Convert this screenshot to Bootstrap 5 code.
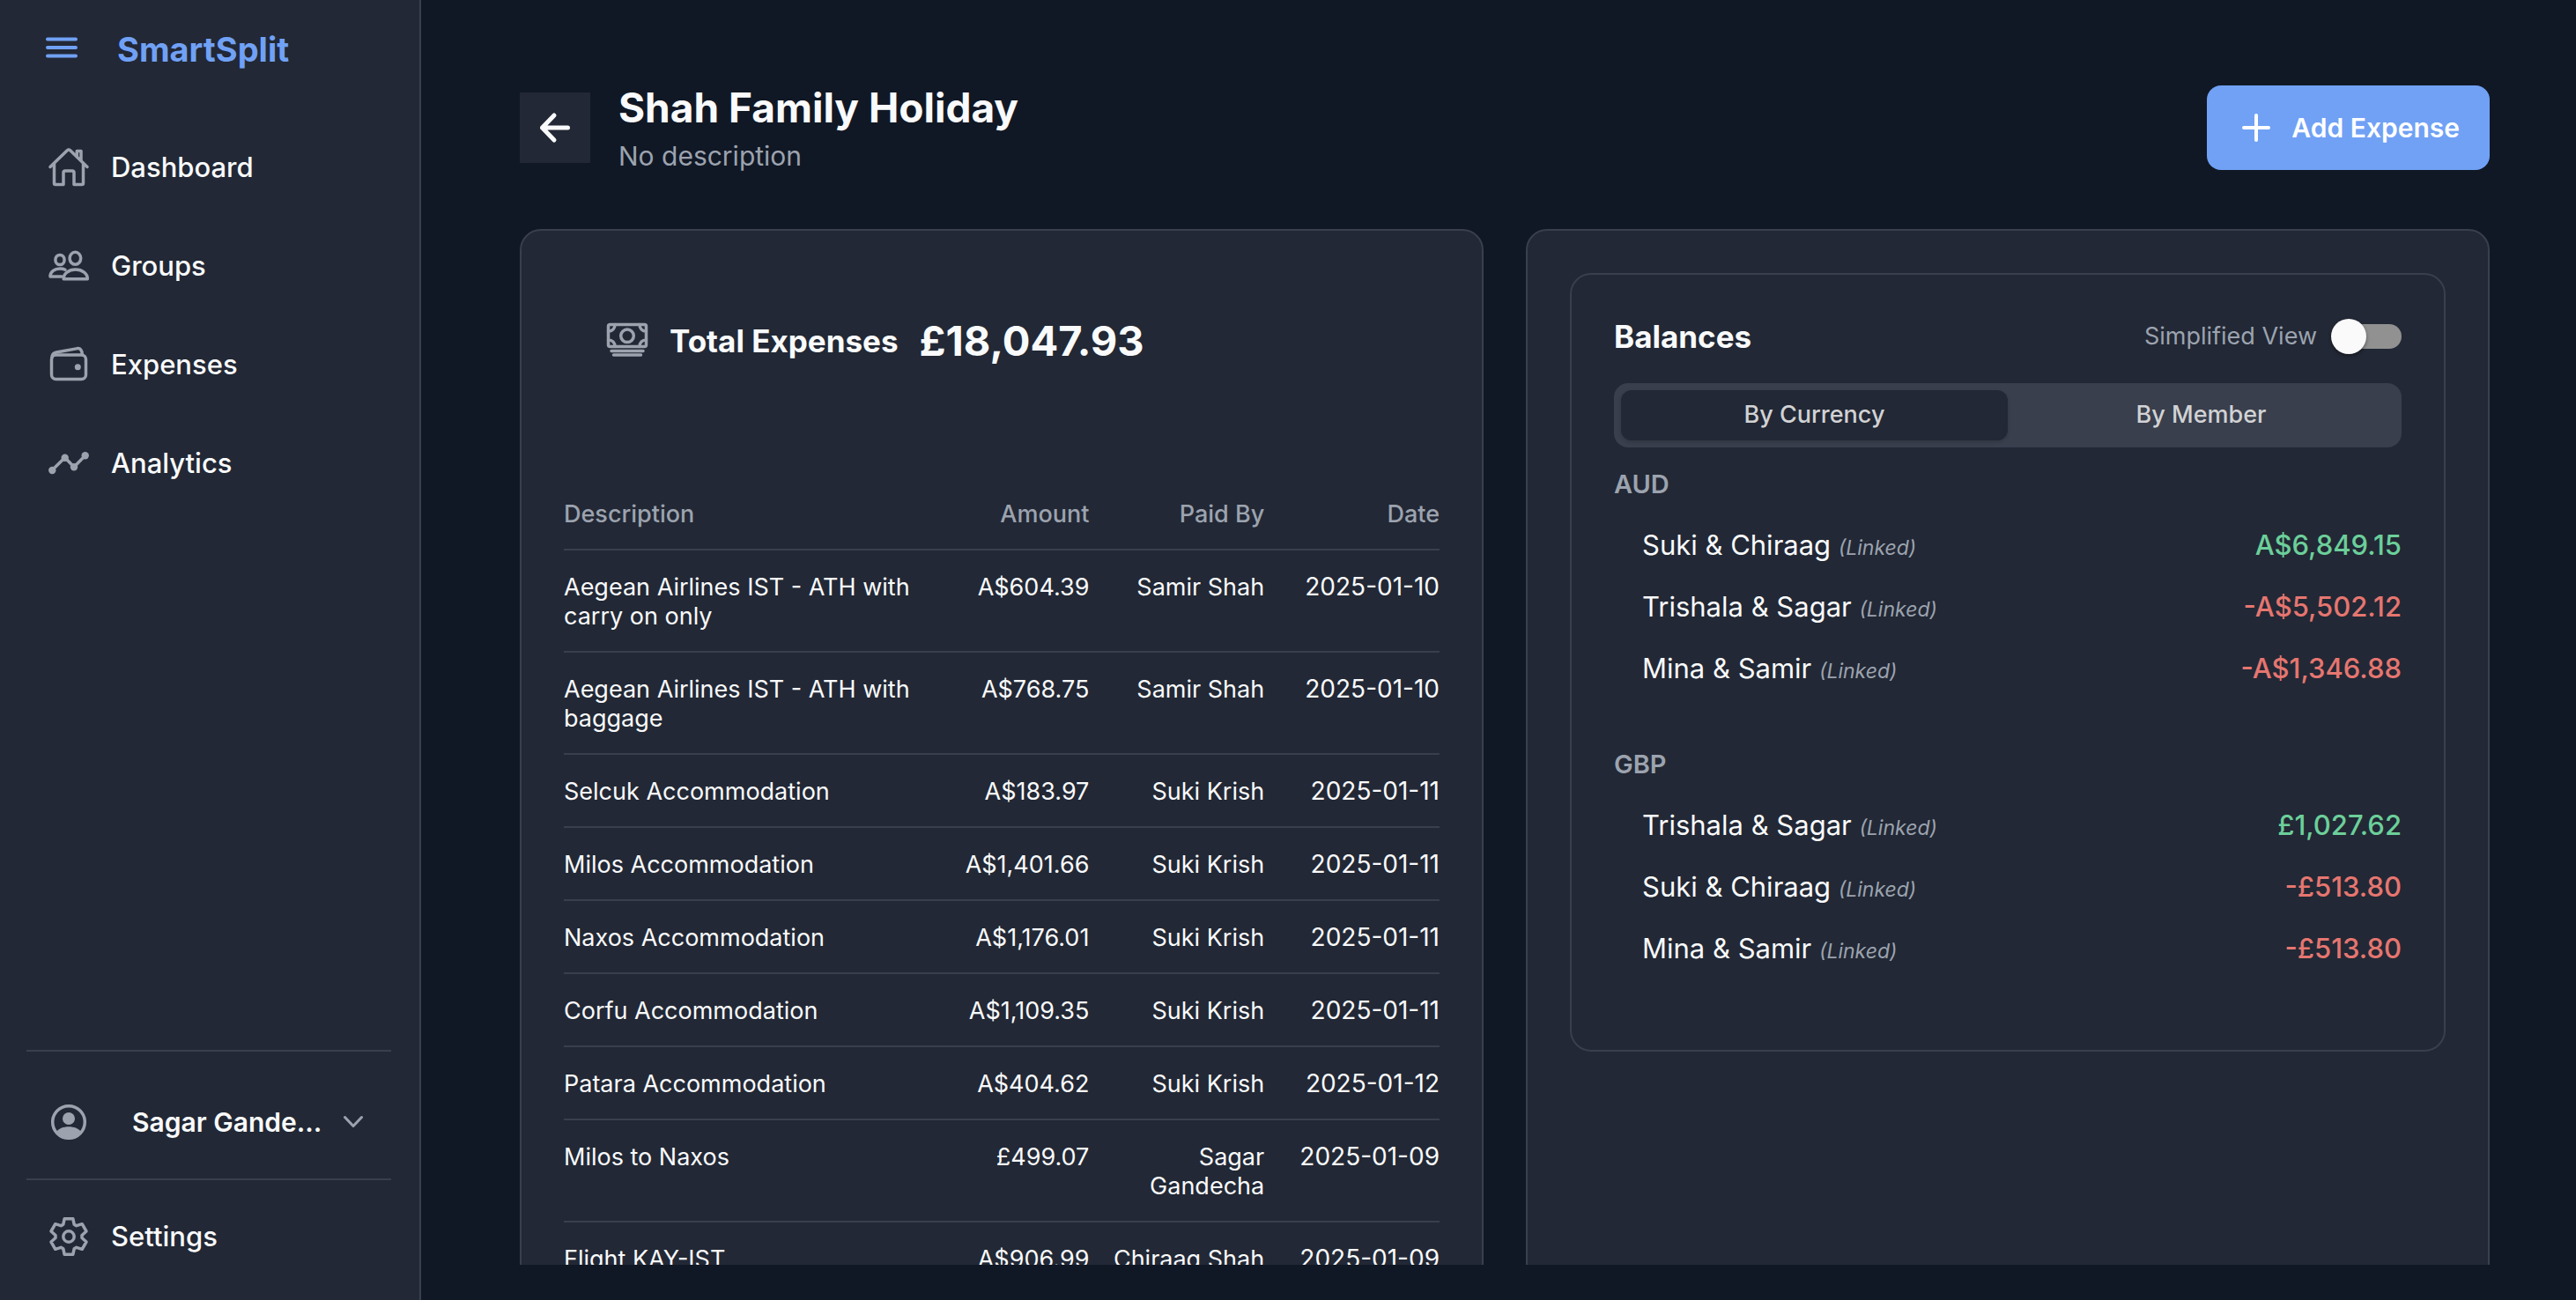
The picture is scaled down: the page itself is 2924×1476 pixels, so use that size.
<!DOCTYPE html>
<html lang="en">
<head>
<meta charset="utf-8">
<meta name="viewport" content="width=device-width, initial-scale=1">
<title>SmartSplit – Shah Family Holiday</title>
<link href="https://cdn.jsdelivr.net/npm/bootstrap@5.3.0/dist/css/bootstrap.min.css" rel="stylesheet">
<style>
  :root {
    --app-bg: #111825;
    --panel: #222835;
    --line: #393f4d;
    --ink: #f9fafb;
    --muted: #9ca3af;
    --accent: #70a1f5;
    --gain: #6ccf9a;
    --loss: #e67670;
  }
  body { background: var(--app-bg); color: var(--ink); font-family: Inter, "Liberation Sans", sans-serif; }
  svg { display: block; flex: none; fill: none; stroke: currentColor; stroke-linecap: round; stroke-linejoin: round; }
  .ico { width: 48px; height: 48px; stroke-width: 3.5; color: var(--muted); }
  .solid { fill: currentColor; stroke: none; }
  button { font-family: inherit; }

  /* Sidebar */
  .side { width: 478px; background: var(--panel); border-right: 2px solid var(--line); }
  .side-top { height: 134px; padding: 30px 52px; gap: 45px; }
  .menu-btn { color: var(--accent); margin-top: 12px; }
  .brand-name { font-size: 38px; line-height: 52px; font-weight: 700; color: var(--accent); }
  .side-item { height: 112px; padding: 0 24px; gap: 24px; font-size: 31px; font-weight: 500; color: var(--ink); text-decoration: none; }
  .side-list { padding: 0 32px 0 30px; }
  .side-rule { border-top: 2px solid var(--line); }
  .profile-box { padding: 24px 0 8px; }
  .profile-btn { font-size: 30px; font-weight: 600; }
  .profile-name { margin-left: 24px; }
  .side-foot { padding: 8px 32px 16px 30px; }

  /* Page header */
  .page { padding: 90px 98px 40px 112px; min-width: 0; }
  .page-head { gap: 32px; margin-bottom: 60px; }
  .back-btn { width: 80px; height: 80px; background: var(--panel); color: var(--ink); }
  .page-title { font-size: 46px; line-height: 64px; font-weight: 700; }
  .page-sub { font-size: 30px; line-height: 46px; color: var(--muted); }
  .add-btn { height: 96px; padding: 0 34px 0 32px; gap: 16px; border-radius: 16px; background: var(--accent); color: #fff; font-size: 30px; font-weight: 600; }

  /* Panels */
  .panels { --bs-gutter-x: 48px; }
  .panel { background: var(--panel); border: 2px solid var(--line); border-radius: 24px; padding: 48px; }
  .total-box { padding: 48px 48px 126px; gap: 24px; line-height: 58px; }
  .total-label { font-size: 35px; line-height: 58px; font-weight: 700; }
  .total-sum { font-size: 47px; font-weight: 700; }

  .expenses { table-layout: fixed; width: 100%; font-size: 27px; line-height: 33px; }
  .expenses th, .expenses td { padding: 25px 0 23px; vertical-align: top; text-align: right; border-bottom: 2px solid var(--line); }
  .expenses th { width: 20%; font-weight: 500; color: var(--muted); }
  .expenses th:first-child { width: 40%; }
  .expenses th:first-child, .expenses td:first-child { text-align: left; }
  .expenses td:last-child { font-size: 28px; }

  .bal-head { height: 44px; margin-bottom: 31px; }
  .bal-title { font-size: 35px; line-height: 44px; font-weight: 700; }
  .simple-label { font-size: 27px; line-height: 40px; color: var(--muted); margin-right: 28px; }
  .simple-switch { appearance: none; position: relative; width: 68px; height: 28px; margin: 0; border-radius: 14px; background: #919191; }
  .simple-switch::before { content: ""; position: absolute; left: -12px; top: -6px; width: 40px; height: 40px; border-radius: 50%; background: #fafafa; box-shadow: 0 2px 4px rgba(0, 0, 0, .4); }
  .seg { background: var(--line); border-radius: 16px; padding: 8px; }
  .seg-btn { height: 57px; font-size: 27px; font-weight: 500; color: #d1d2d4; border-radius: 12px; background: transparent; }
  .seg-btn.on { background: var(--panel); box-shadow: 0 2px 4px rgba(0, 0, 0, .15); }
  .cur-group { padding: 24px 0 40px; }
  .cur-name { font-size: 29px; line-height: 36px; font-weight: 600; color: var(--muted); margin-bottom: 24px; }
  .bal-list { padding-left: 32px; gap: 16px; }
  .bal-list li { font-size: 31px; line-height: 54px; }
  .bal-list i { font-size: 23px; line-height: 1; color: var(--muted); }
  .up, .down { font-weight: 500; }
  .up { color: var(--gain); }
  .down { color: var(--loss); }
</style>
<script src="https://cdn.jsdelivr.net/npm/bootstrap@5.3.0/dist/js/bootstrap.bundle.min.js"></script>
</head>
<body>
<div class="d-flex vh-100 overflow-hidden">

  <aside class="side d-flex flex-column flex-shrink-0">
    <div class="side-top d-flex align-items-start">
      <button type="button" class="menu-btn btn p-0 border-0" aria-label="Menu">
        <svg width="36" height="24" viewBox="0 0 36 24" stroke-width="4"><path d="M2 2.5H34M2 12H34M2 21.5H34"/></svg>
      </button>
      <span class="brand-name">SmartSplit</span>
    </div>

    <nav class="side-list flex-grow-1">
      <a class="side-item d-flex align-items-center" href="#">
        <svg class="ico" viewBox="0 0 48 48"><path d="M3 23.5L22.3 4.8Q24 3.3 25.7 4.8L45 23.5M7.5 19.5V42Q7.5 43.5 9 43.5H18V30Q18 28 20 28H28Q30 28 30 30V43.5H39Q40.5 43.5 40.5 42V19.5M33.3 11V5.5H38V15.5"/></svg>
        Dashboard</a>
      <a class="side-item d-flex align-items-center" href="#">
        <svg class="ico" viewBox="0 0 48 48"><ellipse cx="31.4" cy="15.3" rx="6.3" ry="7"/><ellipse cx="14" cy="17" rx="5.1" ry="5.6"/><path d="M18.2 38.7C18 32.5 24 28 31.7 28S45.5 32.5 45.3 38.7Z"/><path d="M16 36H3C3 30.5 8 27 14 27C16.5 27 18.5 27.4 20 28.2"/></svg>
        Groups</a>
      <a class="side-item d-flex align-items-center" href="#">
        <svg class="ico" viewBox="0 0 48 48"><rect x="4.5" y="13" width="39" height="27.5" rx="5"/><path d="M5 16C5 12 7.5 10.5 10 10L34 5.6C37 5.2 39.2 7.5 39.3 12.5"/><circle class="solid" cx="34.3" cy="26.7" r="3.5"/></svg>
        Expenses</a>
      <a class="side-item d-flex align-items-center" href="#">
        <svg class="ico" viewBox="0 0 48 48"><path d="M5 32L19.7 17.5L30 28.3L42.7 15.3"/><g class="solid"><circle cx="5.3" cy="32" r="4.2"/><circle cx="19.7" cy="17.8" r="4.2"/><circle cx="30" cy="28.2" r="4.2"/><circle cx="42.7" cy="15.3" r="4.2"/></g></svg>
        Analytics</a>
    </nav>

    <div class="side-list">
      <div class="profile-box side-rule">
        <button type="button" class="side-item profile-btn btn border-0 w-100 d-flex align-items-center">
          <svg class="ico" viewBox="0 0 48 48"><circle cx="24" cy="24" r="18.3"/><circle class="solid" cx="24" cy="20" r="7"/><path class="solid" d="M10 35.5C14 27.3 34 27.3 38 35.5C35 40 30 43 24 43S13 40 10 35.5Z"/></svg>
          <span class="profile-name">Sagar Gande...</span>
          <svg width="24" height="16" viewBox="0 0 24 16" stroke-width="3" color="#9ca3af"><path d="M2.5 2.5L12 12.5L21.5 2.5"/></svg>
        </button>
      </div>
      <div class="side-rule"></div>
    </div>
    <div class="side-foot">
      <a class="side-item d-flex align-items-center" href="#">
        <svg class="ico" viewBox="0 0 48 48"><path d="M19.2 3.7H28.8L30.2 10.2L32.8 11.7L39.2 9.7L44 18L39 22.5V25.5L44 30L39.2 38.3L32.8 36.3L30.2 37.8L28.8 44.3H19.2L17.8 37.8L15.2 36.3L8.800 38.3L4 30L9 25.5V22.5L4 18L8.800 9.7L15.2 11.7L17.8 10.2Z"/><circle cx="24" cy="24" r="6.2"/></svg>
        Settings</a>
    </div>
  </aside>

  <main class="page flex-grow-1 d-flex flex-column">
    <header class="page-head d-flex align-items-center">
      <button type="button" class="back-btn btn rounded-0 border-0 p-0 d-flex align-items-center justify-content-center" aria-label="Back">
        <svg width="40" height="40" viewBox="0 0 40 40" stroke-width="5"><path d="M19 6L5.500 20L19 34M5.500 20H34.500"/></svg>
      </button>
      <div class="flex-grow-1">
        <h1 class="page-title m-0">Shah Family Holiday</h1>
        <p class="page-sub m-0">No description</p>
      </div>
      <button type="button" class="add-btn btn border-0 d-flex align-items-center">
        <svg width="48" height="48" viewBox="0 0 48 48" stroke-width="4"><path d="M24 10V38M10 24H38"/></svg>
        Add Expense
      </button>
    </header>

    <div class="flex-grow-1 overflow-hidden">
      <div class="panels row">
        <div class="col-6">
          <section class="panel h-100">
            <div class="total-box d-flex align-items-center">
              <svg class="ico" viewBox="0 0 48 48"><rect x="2.5" y="5.5" width="43" height="25" rx="2"/><circle cx="24" cy="18.3" r="7.3"/><path d="M10 5.5C10 10 7 13 2.5 13M38 5.5C38 10 41 13 45.5 13M10 30.5C10 26 7 23 2.5 23M38 30.5C38 26 41 23 45.5 23"/><path d="M6 35.5H42M8.5 40H39.5"/></svg>
              <h2 class="total-label m-0">Total Expenses</h2>
              <span class="total-sum">£18,047.93</span>
            </div>
            <table class="expenses">
              <thead>
                <tr><th scope="col">Description</th><th scope="col">Amount</th><th scope="col">Paid By</th><th scope="col">Date</th></tr>
              </thead>
              <tbody>
                <tr><td>Aegean Airlines IST - ATH with carry on only</td><td>A$604.39</td><td>Samir Shah</td><td>2025-01-10</td></tr>
                <tr><td>Aegean Airlines IST - ATH with baggage</td><td>A$768.75</td><td>Samir Shah</td><td>2025-01-10</td></tr>
                <tr><td>Selcuk Accommodation</td><td>A$183.97</td><td>Suki Krish</td><td>2025-01-11</td></tr>
                <tr><td>Milos Accommodation</td><td>A$1,401.66</td><td>Suki Krish</td><td>2025-01-11</td></tr>
                <tr><td>Naxos Accommodation</td><td>A$1,176.01</td><td>Suki Krish</td><td>2025-01-11</td></tr>
                <tr><td>Corfu Accommodation</td><td>A$1,109.35</td><td>Suki Krish</td><td>2025-01-11</td></tr>
                <tr><td>Patara Accommodation</td><td>A$404.62</td><td>Suki Krish</td><td>2025-01-12</td></tr>
                <tr><td>Milos to Naxos</td><td>£499.07</td><td>Sagar Gandecha</td><td>2025-01-09</td></tr>
                <tr><td>Flight KAY-IST</td><td>A$906.99</td><td>Chiraag Shah</td><td>2025-01-09</td></tr>
              </tbody>
            </table>
          </section>
        </div>

        <div class="col-6">
          <section class="panel h-100">
            <div class="panel">
              <div class="bal-head d-flex align-items-center">
                <h2 class="bal-title m-0 me-auto">Balances</h2>
                <label class="simple-label" for="simplified">Simplified View</label>
                <input class="simple-switch" type="checkbox" role="switch" id="simplified">
              </div>
              <div class="seg d-flex">
                <button type="button" class="seg-btn on btn border-0 p-0 w-50">By Currency</button>
                <button type="button" class="seg-btn btn border-0 p-0 w-50">By Member</button>
              </div>

              <div class="cur-group">
                <h3 class="cur-name">AUD</h3>
                <ul class="bal-list list-unstyled d-flex flex-column m-0">
                  <li class="d-flex justify-content-between"><span>Suki &amp; Chiraag <i>(Linked)</i></span><span class="up">A$6,849.15</span></li>
                  <li class="d-flex justify-content-between"><span>Trishala &amp; Sagar <i>(Linked)</i></span><span class="down">-A$5,502.12</span></li>
                  <li class="d-flex justify-content-between"><span>Mina &amp; Samir <i>(Linked)</i></span><span class="down">-A$1,346.88</span></li>
                </ul>
              </div>
              <div class="cur-group">
                <h3 class="cur-name">GBP</h3>
                <ul class="bal-list list-unstyled d-flex flex-column m-0">
                  <li class="d-flex justify-content-between"><span>Trishala &amp; Sagar <i>(Linked)</i></span><span class="up">£1,027.62</span></li>
                  <li class="d-flex justify-content-between"><span>Suki &amp; Chiraag <i>(Linked)</i></span><span class="down">-£513.80</span></li>
                  <li class="d-flex justify-content-between"><span>Mina &amp; Samir <i>(Linked)</i></span><span class="down">-£513.80</span></li>
                </ul>
              </div>
            </div>
          </section>
        </div>
      </div>
    </div>
  </main>
</div>
</body>
</html>
